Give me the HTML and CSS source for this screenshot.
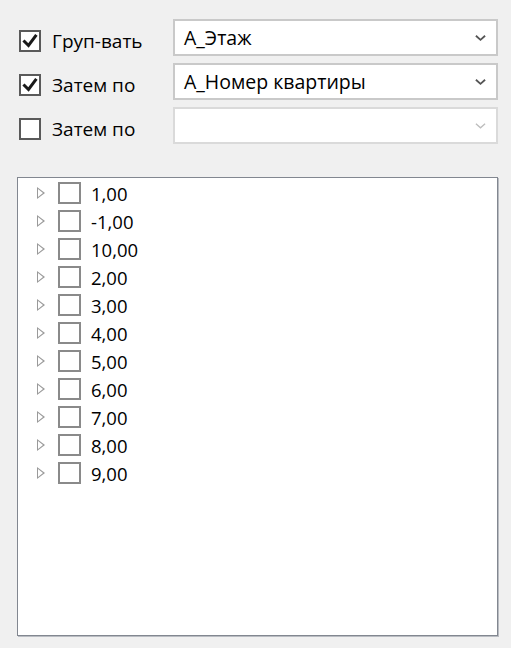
FILE: index.html
```html
<!DOCTYPE html>
<html lang="ru">
<head>
<meta charset="utf-8">
<link rel="stylesheet" href="styles.css">
</head>
<body>
<div class="panel">
  <div class="groups">
    <label class="opt">
      <span class="cb checked"><svg viewBox="0 0 18 18"><path d="M3.5 9.5 L7.5 13.5 L14.5 4" /></svg></span>
      <span class="lbl">Груп-вать</span>
    </label>
    <div class="combo"><span class="val">А_Этаж</span><svg class="chev" viewBox="0 0 12 8"><path d="M1 1.5 L6 6 L11 1.5"/></svg></div>

    <label class="opt">
      <span class="cb checked"><svg viewBox="0 0 18 18"><path d="M3.5 9.5 L7.5 13.5 L14.5 4" /></svg></span>
      <span class="lbl">Затем по</span>
    </label>
    <div class="combo"><span class="val">А_Номер квартиры</span><svg class="chev" viewBox="0 0 12 8"><path d="M1 1.5 L6 6 L11 1.5"/></svg></div>

    <label class="opt">
      <span class="cb"></span>
      <span class="lbl">Затем по</span>
    </label>
    <div class="combo disabled"><span class="val"></span><svg class="chev" viewBox="0 0 12 8"><path d="M1 1.5 L6 6 L11 1.5"/></svg></div>
  </div>

  <div class="tree">
    <div class="row"><span class="tri"></span><span class="tcb"></span><span class="txt">1,00</span></div>
    <div class="row"><span class="tri"></span><span class="tcb"></span><span class="txt">-1,00</span></div>
    <div class="row"><span class="tri"></span><span class="tcb"></span><span class="txt">10,00</span></div>
    <div class="row"><span class="tri"></span><span class="tcb"></span><span class="txt">2,00</span></div>
    <div class="row"><span class="tri"></span><span class="tcb"></span><span class="txt">3,00</span></div>
    <div class="row"><span class="tri"></span><span class="tcb"></span><span class="txt">4,00</span></div>
    <div class="row"><span class="tri"></span><span class="tcb"></span><span class="txt">5,00</span></div>
    <div class="row"><span class="tri"></span><span class="tcb"></span><span class="txt">6,00</span></div>
    <div class="row"><span class="tri"></span><span class="tcb"></span><span class="txt">7,00</span></div>
    <div class="row"><span class="tri"></span><span class="tcb"></span><span class="txt">8,00</span></div>
    <div class="row"><span class="tri"></span><span class="tcb"></span><span class="txt">9,00</span></div>
  </div>
</div>
</body>
</html>
```

FILE: styles.css
```css
html, body {
  margin: 0;
  padding: 0;
  background: #f0f0f0;
}
body {
  font-family: "Open Sans", "Noto Sans", sans-serif;
  font-size: 18px;
  color: #000;
  width: 511px;
  height: 648px;
  overflow: hidden;
}
.panel {
  padding: 19px 13px 0 17px;
}
.groups {
  display: grid;
  grid-template-columns: 154px 325px;
  grid-auto-rows: 37px;
  row-gap: 7px;
  padding-left: 2px;
}
.opt {
  display: flex;
  align-items: center;
  padding-top: 6px;
}
.cb {
  box-sizing: border-box;
  width: 22px;
  height: 22px;
  border: 2px solid #5a5a5a;
  background: #fff;
  display: flex;
  align-items: center;
  justify-content: center;
  flex: none;
}
.cb svg {
  width: 18px;
  height: 18px;
  fill: none;
  stroke: #1a1a1a;
  stroke-width: 3;
  stroke-linecap: square;
}
.lbl {
  margin-left: 11px;
  white-space: nowrap;
  font-size: 19px;
}
.combo {
  box-sizing: border-box;
  background: #fff;
  border: 2px solid #c9c9c9;
  display: flex;
  align-items: center;
  padding-left: 9px;
  padding-right: 10px;
  font-size: 19.5px;
}
.val {
  flex: 1;
  white-space: nowrap;
}
.chev {
  width: 11px;
  height: 8px;
  fill: none;
  stroke: #555;
  stroke-width: 2;
}
.disabled {
  border-color: #dadada;
}
.disabled .chev {
  stroke: #bdbdbd;
  stroke-width: 1.4;
}
.tree {
  margin-top: 33px;
  box-sizing: border-box;
  width: 481px;
  height: 459px;
  background: #fff;
  border: 1px solid #828790;
  box-shadow: 1px 1px 0 #b9bcc2;
  padding-top: 1px;
  font-size: 18.5px;
}
.row {
  display: flex;
  align-items: center;
  height: 28px;
}
.tri {
  width: 0;
  height: 0;
  margin-left: 19px;
  position: relative;
  border-top: 6px solid transparent;
  border-bottom: 6px solid transparent;
  border-left: 8px solid #9a9a9a;
  flex: none;
}
.tri::after {
  content: "";
  position: absolute;
  left: -7px;
  top: -4px;
  border-top: 4px solid transparent;
  border-bottom: 4px solid transparent;
  border-left: 5px solid #fff;
}
.tcb {
  box-sizing: border-box;
  width: 23px;
  height: 22px;
  border: 2px solid #8a8a8a;
  margin-left: 13px;
  flex: none;
}
.txt {
  margin-left: 10px;
}
```
